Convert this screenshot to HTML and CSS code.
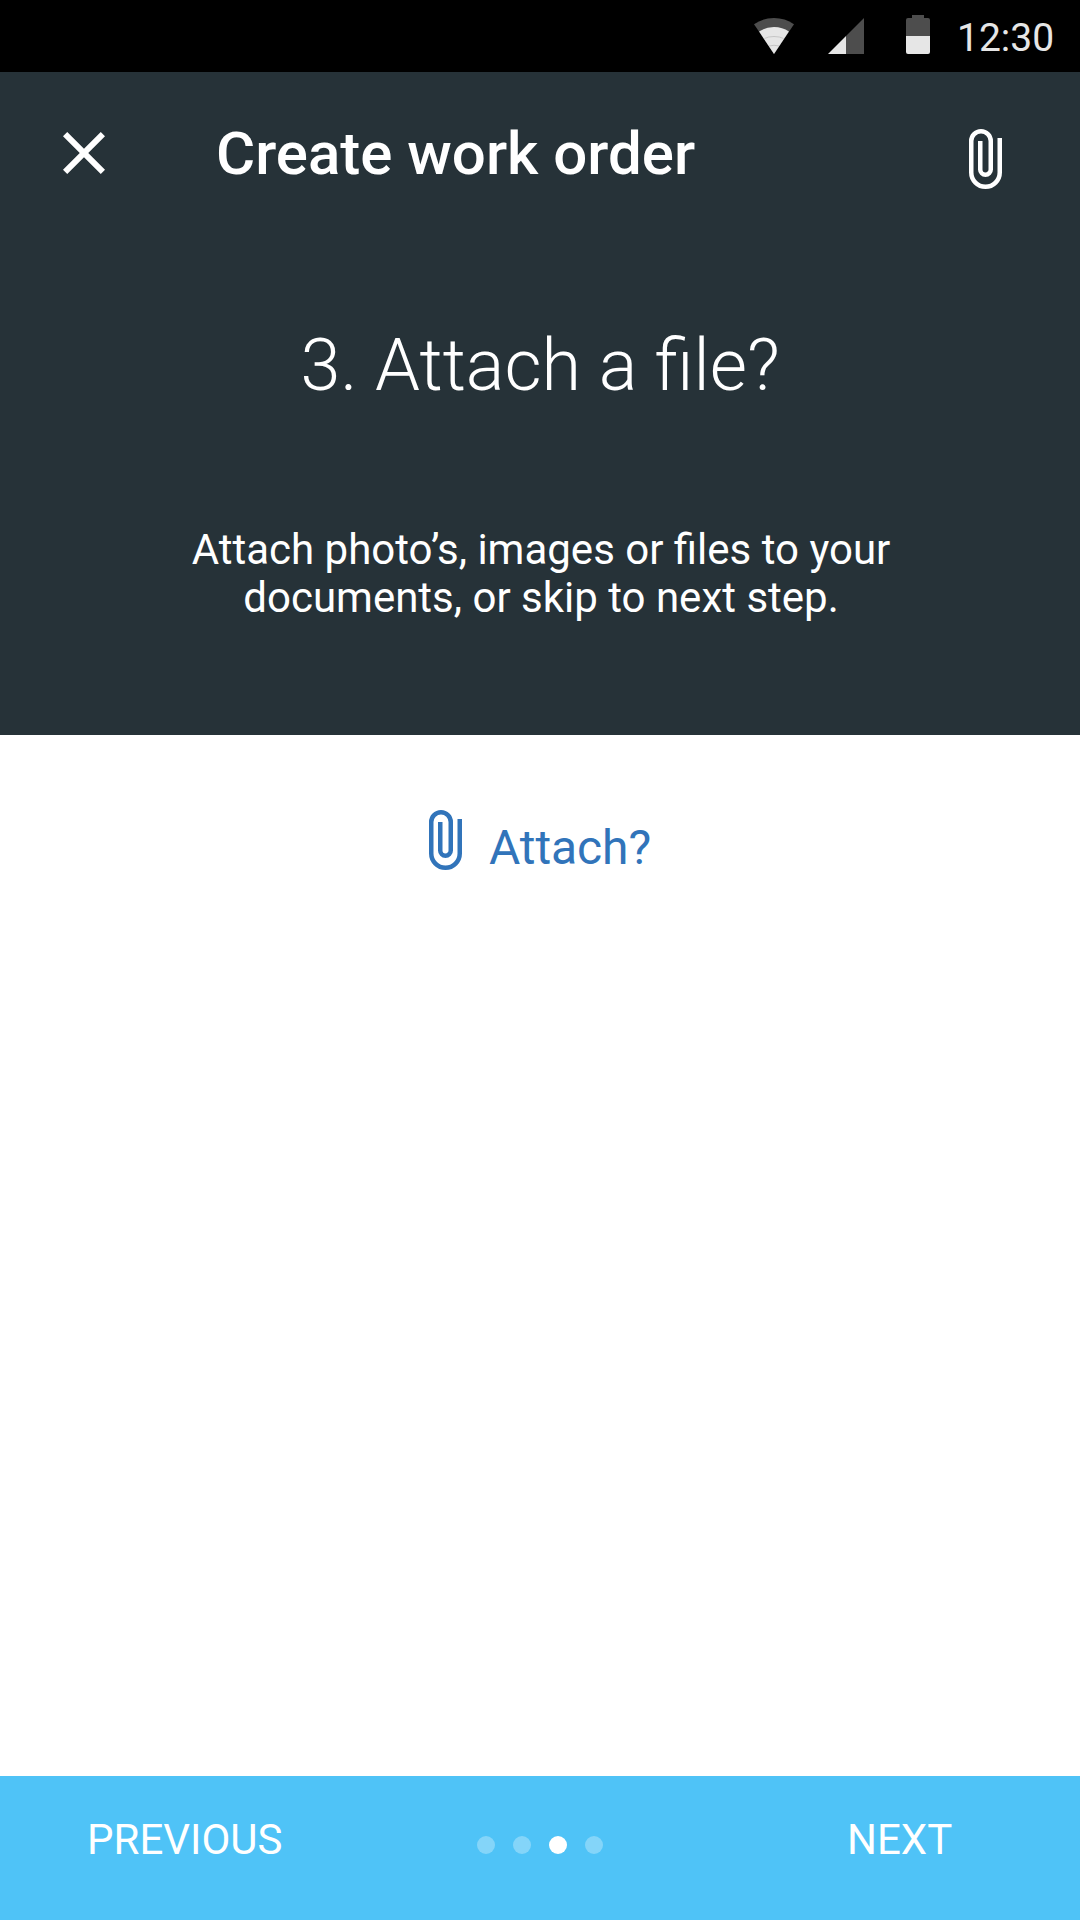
FILE: index.html
```html
<!DOCTYPE html>
<html lang="en">
<head>
<meta charset="utf-8">
<title>Create work order</title>
<link rel="stylesheet" href="styles.css">
</head>
<body>
<div class="screen">
  <div class="status-bar">
    <svg class="status-wifi" viewBox="0 0 40 36" width="40" height="36">
      <path fill="#4d4d4d" d="M20 36 0 6.2Q9 0 20 0t20 6.2z"/>
      <path fill="#e6e6e6" d="M20 36 5.1 13.6Q11.500 9 20 9t14.900 4.600z"/>
      <path fill="none" stroke="#bdbdbd" stroke-width=".8" d="M10.500 20.500Q14 18.500 20 18.500t9.500 2M15 28q5-1.500 10 0"/>
    </svg>
    <svg class="status-signal" viewBox="0 0 36 36" width="36" height="36">
      <path fill="#4d4d4d" d="M36 0v36H18V18z"/>
      <path fill="#e6e6e6" d="M18 18v18H0z"/>
    </svg>
    <svg class="status-battery" viewBox="0 0 24 39" width="24" height="39">
      <path fill="#4d4d4d" d="M0 21V5a2 2 0 0 1 2-2h4V0h12v3h4a2 2 0 0 1 2 2v16z"/>
      <path fill="#e6e6e6" d="M0 21h24v16a2 2 0 0 1-2 2H2a2 2 0 0 1-2-2z"/>
    </svg>
    <span class="clock">12:30</span>
  </div>

  <header class="header">
    <div class="app-bar">
      <svg class="close" viewBox="0 0 14 14" width="42" height="42">
        <path fill="#fff" d="M14 1.410 12.590 0 7 5.590 1.410 0 0 1.410 5.590 7 0 12.590 1.410 14 7 8.410 12.590 14 14 12.590 8.410 7z"/>
      </svg>
      <h1 class="title">Create work order</h1>
      <svg class="clip" viewBox="0 0 11 20" width="33" height="60">
        <path d="M10.250 3v11.500a4.750 4.750 0 0 1-9.500 0V4a3.250 3.250 0 0 1 6.500 0v9.500a1.750 1.750 0 0 1-3.500 0V4"/>
      </svg>
    </div>
    <h2 class="step">3. Attach a file?</h2>
    <p class="hint">Attach photo’s, images or files to your<br>documents, or skip to next step.</p>
  </header>

  <main class="content">
    <div class="attach">
      <svg class="clip" viewBox="0 0 11 20" width="33" height="60">
        <path d="M10.250 3v11.500a4.750 4.750 0 0 1-9.500 0V4a3.250 3.250 0 0 1 6.500 0v9.500a1.750 1.750 0 0 1-3.500 0V4"/>
      </svg>
      <span class="attach-label">Attach?</span>
    </div>
  </main>

  <footer class="stepper">
    <span class="nav">PREVIOUS</span>
    <div class="dots">
      <i class="dot"></i><i class="dot"></i><i class="dot dot-active"></i><i class="dot"></i>
    </div>
    <span class="nav nav-next">NEXT</span>
  </footer>
</div>
</body>
</html>
```

FILE: styles.css
```css
* { box-sizing: border-box; margin: 0; padding: 0; }

body { font-family: Roboto, sans-serif; background: #fff; }

svg { display: block; flex: none; }

.screen {
  width: 1080px;
  height: 1920px;
  display: flex;
  flex-direction: column;
  overflow: hidden;
}

.status-bar {
  height: 72px;
  padding-left: 754px;
  display: flex;
  align-items: flex-start;
  background: #000;
}
.status-wifi { margin-top: 18px; }
.status-signal { margin: 18px 0 0 34px; }
.status-battery { margin: 15px 0 0 42px; }
.clock {
  margin-left: 27px;
  line-height: 76px;
  font-size: 39px;
  color: #e6e6e6;
}

.header {
  height: 663px;
  background: #263238;
  color: #fff;
  text-align: center;
}
.app-bar {
  height: 162px;
  padding: 0 78px 0 63px;
  display: flex;
  align-items: center;
}
.title {
  flex: 1;
  margin: 2px 0 0 111px;
  text-align: left;
  font-size: 60px;
  line-height: 72px;
  font-weight: 500;
}
.clip {
  fill: none;
  stroke: currentColor;
  stroke-width: 1.5;
}
.app-bar .clip { margin-top: 12px; }
.step {
  margin-top: 90px;
  font-size: 72px;
  line-height: 84px;
  font-weight: 300;
}
.hint {
  margin-top: 118px;
  padding-left: 2px;
  font-size: 42px;
  line-height: 48px;
}

.content { flex: 1; padding-top: 75px; }
.attach {
  display: flex;
  padding-left: 429px;
  color: #3174ba;
}
.attach-label {
  margin: 8px 0 0 27px;
  font-size: 48px;
  line-height: 60px;
  letter-spacing: -.1px;
}

.stepper {
  height: 144px;
  padding-left: 87px;
  display: grid;
  grid-template-columns: 390px 370px 1fr;
  background: #4fc3f7;
  color: #fff;
}
.nav {
  padding-top: 40px;
  font-size: 42px;
  line-height: 48px;
}
.dots { display: flex; gap: 18px; padding-top: 60px; }
.dot {
  width: 18px;
  height: 18px;
  border-radius: 50%;
  background: #fff;
  opacity: .3;
}
.dot-active { opacity: 1; }
```
